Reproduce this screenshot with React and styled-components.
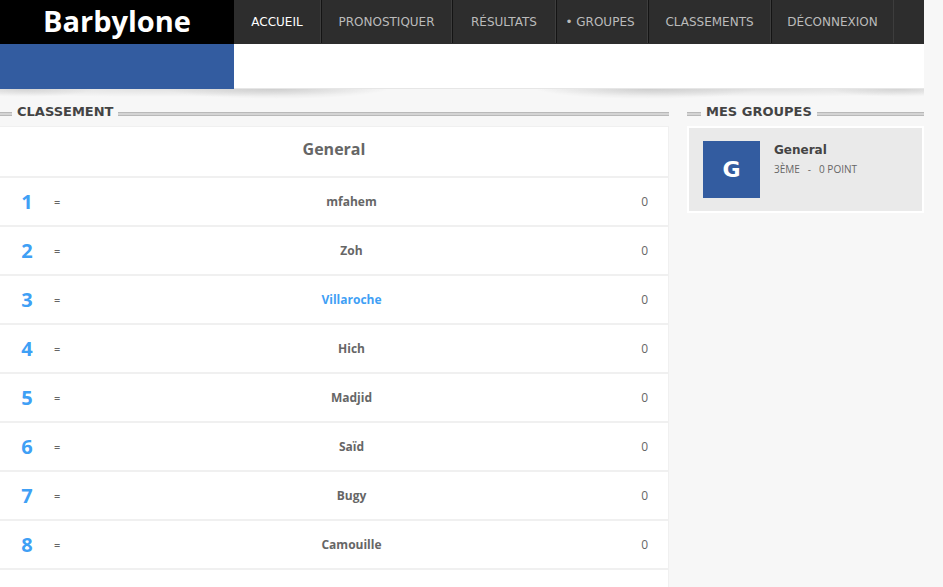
import React from 'react';
import styled, { createGlobalStyle } from 'styled-components';

const GlobalStyle = createGlobalStyle`
  *, *::before, *::after { box-sizing: border-box; }
  body {
    margin: 0;
    background: #f7f7f7;
    color: #666;
    font-family: 'Open Sans', 'Noto Sans', sans-serif;
    font-size: 12px;
  }
  h1, h2, h3, p, ul { margin: 0; padding: 0; }
`;

const headingFont = "'DejaVu Sans', Verdana, sans-serif";

const Page = styled.div`
  height: 100vh;
  overflow: hidden;
  padding-right: 19px;
`;

const TopBar = styled.header`
  display: flex;
  height: 44px;
  background: #2d2d2d;
`;

const Logo = styled.h1`
  flex: 0 0 234px;
  background: #000;
  color: #fff;
  font-size: 29px;
  line-height: 42px;
  text-align: center;
`;

const Nav = styled.nav`
  display: flex;
`;

const NavItem = styled.a`
  display: flex;
  align-items: center;
  justify-content: center;
  flex: 0 0 ${(p) => p.$width};
  height: 43px;
  padding-right: ${(p) => (p.$bullet ? '4px' : '0')};
  border-right: 1px solid #3d3d3d;
  color: ${(p) => (p.$active ? '#fff' : '#bbb')};
  font-family: ${headingFont};
  font-size: 12px;
  text-decoration: none;
  white-space: nowrap;

  & + & { border-left: 1px solid #141414; }
`;

const Banner = styled.div`
  display: flex;
  height: 45px;
  background: #fff;
  border-bottom: 1px solid #e6e6e6;
`;

const BannerBlock = styled.div`
  flex: 0 0 234px;
  height: 45px;
  background: #335ca0;
`;

const Shadow = styled.div`
  display: flex;
  justify-content: space-between;
  height: 12px;
`;

const ShadowPart = styled.div`
  width: 386px;
  background:
    radial-gradient(ellipse 110px 10px at 276px 0, rgba(0, 0, 0, 0.12), transparent),
    radial-gradient(ellipse 240px 8px at 160px 0, rgba(0, 0, 0, 0.09), transparent),
    radial-gradient(ellipse 70px 8px at 24px 0, rgba(0, 0, 0, 0.11), transparent);
  transform: ${(p) => (p.$mirrored ? 'scaleX(-1)' : 'none')};
`;

const Columns = styled.main`
  display: grid;
  grid-template-columns: minmax(0, 1fr) 237px;
  gap: 18px;
  align-items: start;
`;

const SectionTitle = styled.h2`
  display: flex;
  align-items: center;
  gap: 5px;
  height: 22px;
  margin-bottom: 3px;
  color: #444;
  font-family: ${headingFont};
  font-size: 13px;
  line-height: 22px;
  white-space: nowrap;

  &::before, &::after {
    content: '';
    height: 4px;
    margin-top: 3px;
    background: #d4d4d4;
    border: solid #b9b9b9;
    border-width: 1px 0;
  }
  &::before { flex: 0 0 ${(p) => p.$lead}; }
  &::after { flex: 1; }
`;

const Ranking = styled.table`
  width: 100%;
  border-collapse: separate;
  border-spacing: 0;
  background: #fff;
  border: solid #f0f0f0;
  border-width: 1px 1px 0 0;
`;

const GroupName = styled.th`
  height: 51px;
  padding: 0 0 6px;
  border-bottom: 2px solid #f0f0f0;
  font-size: 16px;
`;

const Cell = styled.td`
  height: 49px;
  padding: 0;
  border-bottom: 2px solid #f0f0f0;
`;

const Position = styled(Cell)`
  width: 54px;
  color: #3fa0f5;
  font-size: 20px;
  font-weight: 700;
  text-align: center;
`;

const Trend = styled(Cell)`
  width: 90px;
  font-family: 'Noto Sans', sans-serif;
  font-size: 11px;
`;

const Player = styled(Cell)`
  color: ${(p) => (p.$current ? '#3fa0f5' : '#666')};
  font-weight: 700;
  text-align: center;
`;

const Points = styled(Cell)`
  width: 109px;
  padding-right: 20px;
  text-align: right;
`;

const GroupCard = styled.article`
  display: flex;
  gap: 14px;
  padding: 13px 14px;
  background: #eaeaea;
  border: 2px solid #fff;
`;

const Avatar = styled.div`
  display: grid;
  place-items: center;
  width: 57px;
  height: 57px;
  background: #335ca0;
  color: #fff;
  font-family: ${headingFont};
  font-size: 22px;
  font-weight: 700;
`;

const CardName = styled.h3`
  color: #444;
  font-family: ${headingFont};
  font-size: 12px;
  line-height: 18px;
`;

const CardInfo = styled.p`
  display: flex;
  gap: 8px;
  font-size: 10px;
  line-height: 20px;
`;

const links = [
  { label: 'ACCUEIL', width: '87px', active: true },
  { label: 'PRONOSTIQUER', width: '131px' },
  { label: 'RÉSULTATS', width: '104px' },
  { label: '• GROUPES', width: '92px', bullet: true },
  { label: 'CLASSEMENTS', width: '123px' },
  { label: 'DÉCONNEXION', width: '123px' },
];

const players = [
  'mfahem', 'Zoh', 'Villaroche', 'Hich', 'Madjid', 'Saïd', 'Bugy', 'Camouille',
];

export default function App() {
  return (
    <Page>
      <GlobalStyle />
      <TopBar>
        <Logo>Barbylone</Logo>
        <Nav>
          {links.map((l) => (
            <NavItem
              key={l.label}
              href="#"
              $width={l.width}
              $active={l.active}
              $bullet={l.bullet}
            >
              {l.label}
            </NavItem>
          ))}
        </Nav>
      </TopBar>
      <Banner><BannerBlock /></Banner>
      <Shadow><ShadowPart /><ShadowPart $mirrored /></Shadow>
      <Columns>
        <section>
          <SectionTitle $lead="12px">CLASSEMENT</SectionTitle>
          <Ranking>
            <thead>
              <tr><GroupName colSpan={4}>General</GroupName></tr>
            </thead>
            <tbody>
              {players.map((name, i) => (
                <tr key={name}>
                  <Position>{i + 1}</Position>
                  <Trend>=</Trend>
                  <Player $current={name === 'Villaroche'}>{name}</Player>
                  <Points>0</Points>
                </tr>
              ))}
              <tr><Cell colSpan={4} /></tr>
            </tbody>
          </Ranking>
        </section>
        <aside>
          <SectionTitle $lead="14px">MES GROUPES</SectionTitle>
          <GroupCard>
            <Avatar>G</Avatar>
            <div>
              <CardName>General</CardName>
              <CardInfo><span>3ÈME</span><span>-</span><span>0 POINT</span></CardInfo>
            </div>
          </GroupCard>
        </aside>
      </Columns>
    </Page>
  );
}
